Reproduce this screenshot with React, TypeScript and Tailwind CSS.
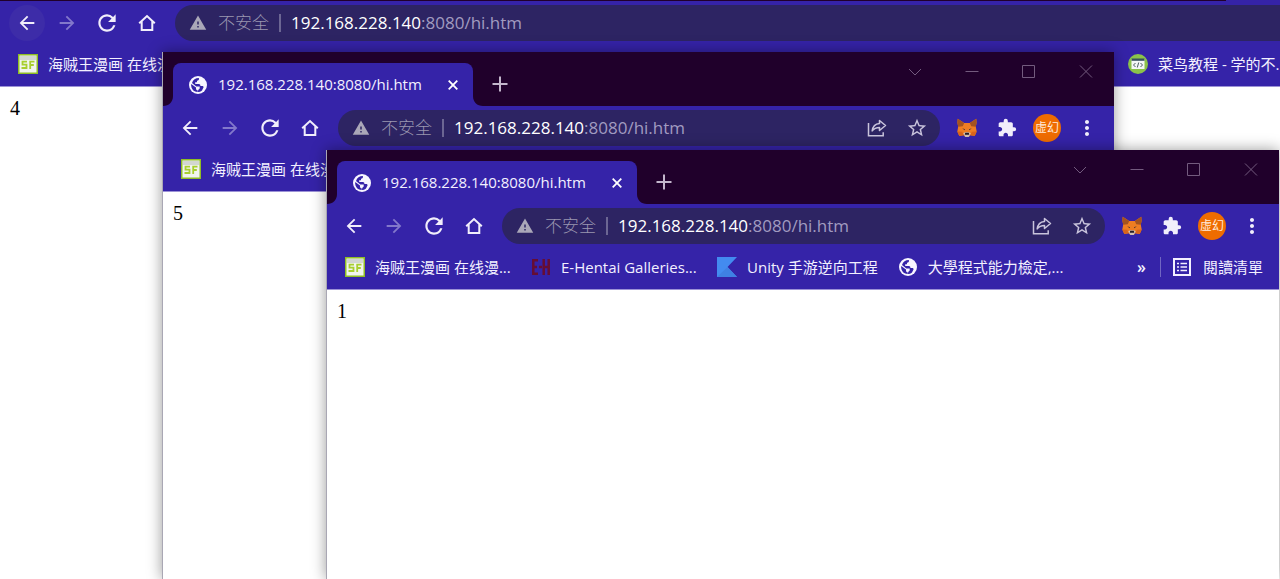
import React from "react";
import {
  MdArrowBack,
  MdArrowForward,
  MdExtension,
  MdMoreVert,
  MdRefresh,
  MdStarBorder,
  MdWarning,
} from "react-icons/md";

const uiFont = "font-['Open_Sans','Noto_Sans_CJK_SC',sans-serif]";

function Globe({ className = "" }: { className?: string }) {
  return (
    <svg viewBox="0 0 18 18" className={`size-[18px] shrink-0 ${className}`} aria-hidden="true">
      <circle cx="9" cy="9" r="9" fill="#f7f5ff" />
      <path
        d="M9.800 2.100C10.500 3.500 9.600 4.700 8 4.700V6.300H6.200V8H9.900C11 8 11.400 8.700 11.400 9.900H13C14 9.900 14.500 10.400 14.600 11.300L13 14.400C11.800 15.400 10.200 16 8.700 16V14.300C7.600 14.300 7 13.600 7 12.500V11.500L2.200 8.100C2 9 2.100 10.300 2.500 11.400A7 7 0 0 0 8.200 16H9L9.200 13.900 10.700 12.400V10.600H7.300L3 7C4 4 6.500 2.100 9.800 2.100Z"
        fill="#3523a8"
      />
    </svg>
  );
}

function HomeIcon() {
  return (
    <svg viewBox="0 0 20 20" className="size-5" fill="none" stroke="currentColor" strokeWidth="2" aria-hidden="true">
      <path d="M2.200 10.200 10 3l7.800 7.200M4.700 8.500V17h10.600V8.500" />
    </svg>
  );
}

function ShareIcon() {
  return (
    <svg viewBox="0 0 20 20" className="size-5" fill="none" stroke="currentColor" strokeWidth="1.500" aria-hidden="true">
      <path d="M1.500 5v12.700h14.700v-3.500" />
      <path d="M12.500 2.500 18.500 7.500l-6 5V9.600c-3.300 0-5.500 1-7.300 3.300.5-4 2.800-7 7.300-7.400Z" strokeLinejoin="round" />
    </svg>
  );
}

function Fox() {
  return (
    <svg viewBox="0 0 20 20" className="size-5" aria-hidden="true">
      <path d="M.7.8 7.200 5h5.600L19.300.8l.3 4-.8 4 .9 4.700-2 4.500-4.200-.8L11.500 19h-3l-2-1.800-4.200.8-2-4.500.9-4.700-.8-4Z" fill="#ee7d22" />
      <path d="M.7.8 7.200 5 5.800 8.200 1.200 8.800.4 4.800ZM19.300.8 12.800 5l1.400 3.200 4.600.6.800-4Z" fill="#a4531f" />
      <path d="m.3 13.500 5 .2 1.200 3.500-4.200.8ZM19.700 13.500l-5 .2-1.200 3.500 4.200.8Z" fill="#d9641c" />
      <path d="m5.200 10.300 2.800.9-.3 1.100ZM14.800 10.300l-2.800.9.3 1.100Z" fill="#3a2c33" />
      <path d="m6.300 15.200 2-1h3.400l2 1-2 3.800H8.300Z" fill="#cfc0b8" />
      <path d="M8.200 14.800h3.600l.4 2H7.800Z" fill="#241b26" />
    </svg>
  );
}

function SfIcon() {
  return (
    <svg viewBox="0 0 20 20" className="size-5 shrink-0" aria-hidden="true">
      <rect x=".75" y=".75" width="18.500" height="18.500" fill="#f1f4ee" stroke="#8fbd24" strokeWidth="1.500" />
      <path d="M2 2h16v4H2Z" fill="#d2d6d2" />
      <path d="M9 7.700H4.500v3h4v3.300H3.500M16.500 7.700H12.200V15M12 11h3.800" fill="none" stroke="#a8cf2f" strokeWidth="1.800" />
    </svg>
  );
}

function EhIcon() {
  return (
    <svg viewBox="0 0 20 20" className="size-5 shrink-0" fill="none" stroke="#660d33" strokeWidth="2.500" aria-hidden="true">
      <path d="M7 3.300H2.300v13.400H7M2.300 10H6M8 10h3M12.700 2v16M17.700 2v16M12.700 10h5" />
    </svg>
  );
}

function KiteIcon() {
  return (
    <svg viewBox="0 0 20 20" className="size-5 shrink-0" aria-hidden="true">
      <path d="M0 0h20L10.500 10 20 20H0Z" fill="#438bf0" />
      <path d="M10.500 10 20 20H0Z" fill="#3f80e3" />
    </svg>
  );
}

function CodeBadge() {
  return (
    <svg viewBox="0 0 20 20" className="size-5 shrink-0" aria-hidden="true">
      <circle cx="10" cy="10" r="10" fill="#8bc34a" />
      <path d="M3.500 5h13v10h-13Z" fill="#f4f7f8" />
      <path d="M3.500 4.500h13v2.300h-13Z" fill="#37505c" />
      <path d="m7.500 9-2 2 2 2m5-4 2 2-2 2m-1.800-4.500-1.400 5" fill="none" stroke="#4d5b62" />
    </svg>
  );
}

function ListIcon() {
  return (
    <svg viewBox="0 0 18 18" className="size-[18px] shrink-0" fill="none" stroke="currentColor" aria-hidden="true">
      <rect x="1" y="1" width="16" height="16" strokeWidth="2" />
      <path d="M4 5.500h2M4 9h2M4 12.500h2M7.500 5.500H14M7.500 9H14M7.500 12.500H14" strokeWidth="1.500" />
    </svg>
  );
}

function IconButton({
  label,
  className = "",
  children,
}: {
  label: string;
  className?: string;
  children: React.ReactNode;
}) {
  return (
    <button
      type="button"
      aria-label={label}
      className={`flex size-9 shrink-0 items-center justify-center rounded-full ${className}`}
    >
      {children}
    </button>
  );
}

function TitleBar() {
  return (
    <div className="flex h-[54px] items-end bg-[#20002b]">
      <svg viewBox="0 0 10 10" className="size-[10px] shrink-0 text-[#3523a8]" aria-hidden="true">
        <path d="M10 0v10H0C6 10 10 6 10 0Z" fill="currentColor" />
      </svg>
      <div className="flex h-[43px] w-[300px] shrink-0 items-center rounded-t-lg bg-[#3523a8] pr-3 pl-4">
        <Globe />
        <span className="ml-[11px] flex-1 text-[15px] whitespace-nowrap text-[#f3f0ff]">192.168.228.140:8080/hi.htm</span>
        <button type="button" aria-label="關閉分頁" className="flex size-4 items-center justify-center text-white">
          <svg viewBox="0 0 10 10" className="size-[10px]" stroke="currentColor" strokeWidth="1.800" aria-hidden="true">
            <path d="m.7.7 8.600 8.600M9.300.7.7 9.300" />
          </svg>
        </button>
      </div>
      <svg viewBox="0 0 10 10" className="size-[10px] shrink-0 text-[#3523a8]" aria-hidden="true">
        <path d="M0 0v10h10C4 10 0 6 0 0Z" fill="currentColor" />
      </svg>
      <button type="button" aria-label="新分頁" className="mb-[10px] ml-[5px] flex size-6 items-center justify-center text-[#c3b6cc]">
        <svg viewBox="0 0 16 16" className="size-4" stroke="currentColor" strokeWidth="2" aria-hidden="true">
          <path d="M8 .5v15M.5 8h15" />
        </svg>
      </button>
      <div className="mb-[15px] ml-auto flex gap-[17px] pr-2 text-[#735b7e]">
        {[
          ["搜尋分頁", "m1 5 6 6 6-6"],
          ["最小化", "M.5 7.500h13"],
          ["最大化", "M.5 1.500h12v12H.5Z"],
          ["關閉", "m1 1.500 12 12m0-12-12 12"],
        ].map(([label, d]) => (
          <button key={label} type="button" aria-label={label} className="flex size-10 items-center justify-center">
            <svg viewBox="0 0 14 15" className="h-[15px] w-[14px]" fill="none" stroke="currentColor" aria-hidden="true">
              <path d={d} />
            </svg>
          </button>
        ))}
      </div>
    </div>
  );
}

function Address({ openEnded }: { openEnded: boolean }) {
  return (
    <div
      className={`flex h-9 flex-1 items-center bg-[#2d2463] pr-[5px] pl-[14px] ${openEnded ? "rounded-l-full" : "rounded-full"}`}
    >
      <MdWarning className="size-[18px] shrink-0 text-[#aaa7b8]" aria-hidden="true" />
      <span className="ml-[11px] shrink-0 text-[17px] font-light text-[#9a96b0]">不安全</span>
      <span className="mx-[10px] h-[18px] w-[2px] shrink-0 bg-[#6c6693]" />
      <span className="shrink-0 text-[17px] whitespace-nowrap text-[#a19bc0]">
        <span className="text-white">192.168.228.140</span>:8080/hi.htm
      </span>
      {!openEnded && (
        <div className="ml-auto flex gap-1 text-[#c9c4dc]">
          <IconButton label="分享">
            <ShareIcon />
          </IconButton>
          <IconButton label="加入書籤">
            <MdStarBorder className="size-[22px]" />
          </IconButton>
        </div>
      )}
    </div>
  );
}

function Toolbar({ maximized = false }: { maximized?: boolean }) {
  return (
    <div
      className={`flex h-[45px] items-center bg-[#3523a8] pb-[2px] pl-[9px] text-[#f1eefb] ${maximized ? "" : "pr-[9px]"}`}
    >
      <div className="mr-[10px] flex gap-1">
        <IconButton label="上一頁" className={maximized ? "bg-[#3d2ca8]" : ""}>
          <MdArrowBack className="size-[22px]" />
        </IconButton>
        <IconButton label="下一頁" className="text-[#8378cb]">
          <MdArrowForward className="size-[22px]" />
        </IconButton>
        <IconButton label="重新載入">
          <MdRefresh className="size-[26px]" />
        </IconButton>
        <IconButton label="首頁">
          <HomeIcon />
        </IconButton>
      </div>
      <Address openEnded={maximized} />
      {!maximized && (
        <div className="ml-[9px] flex gap-1">
          <IconButton label="MetaMask">
            <Fox />
          </IconButton>
          <IconButton label="擴充功能">
            <MdExtension className="size-5" />
          </IconButton>
          <IconButton label="個人資料">
            <span className="flex size-7 items-center justify-center rounded-full bg-[#ef6c00] text-[12px] whitespace-nowrap text-[#ffe9d8]">
              虚幻
            </span>
          </IconButton>
          <IconButton label="選單">
            <MdMoreVert className="size-6" />
          </IconButton>
        </div>
      )}
    </div>
  );
}

function Bookmark({
  icon,
  text,
  capped = false,
}: {
  icon: React.ReactNode;
  text: string;
  capped?: boolean;
}) {
  return (
    <a
      href="#"
      className={`flex shrink-0 items-center gap-[10px] text-[15px] whitespace-nowrap text-[#f3f0ff] ${capped ? "w-[166px]" : ""}`}
    >
      {icon}
      <span>{text}</span>
    </a>
  );
}

function BookmarkBar({ children }: { children: React.ReactNode }) {
  return (
    <div className="flex h-[41px] items-center gap-5 border-b border-[#9c92d6] bg-[#3523a8] pb-1 pl-[18px]">
      {children}
    </div>
  );
}

function Page({ children }: { children: React.ReactNode }) {
  return (
    <main className="flex-1 bg-white px-[10px] pt-[9px] font-['Liberation_Serif',serif] text-[20px] leading-6 text-black">
      {children}
    </main>
  );
}

const manga = <Bookmark icon={<SfIcon />} text="海贼王漫画 在线漫..." capped />;

function BrowserWindow({
  className,
  bookmarks,
  children,
}: {
  className: string;
  bookmarks: React.ReactNode;
  children: React.ReactNode;
}) {
  return (
    <section
      className={`absolute bottom-0 flex flex-col border-l border-[#a9a7b4] bg-white shadow-[0_0_14px_rgba(0,0,0,0.4)] ${className}`}
    >
      <TitleBar />
      <Toolbar />
      <BookmarkBar>{bookmarks}</BookmarkBar>
      <Page>{children}</Page>
    </section>
  );
}

export default function App() {
  return (
    <div className={`relative flex min-h-screen flex-col overflow-hidden bg-white ${uiFont}`}>
      <section className="flex flex-1 flex-col">
        <div className="h-px bg-[#3523a8] pr-[54px]">
          <div className="h-full bg-[#20002b]" />
        </div>
        <Toolbar maximized />
        <BookmarkBar>
          {manga}
          <div className="ml-auto w-[152px]">
            <Bookmark icon={<CodeBadge />} text="菜鸟教程 - 学的不." />
          </div>
        </BookmarkBar>
        <Page>4</Page>
      </section>

      <BrowserWindow className="top-[52px] right-[166px] left-[162px]" bookmarks={manga}>
        5
      </BrowserWindow>

      <BrowserWindow
        className="top-[150px] right-px left-[326px]"
        bookmarks={
          <>
            {manga}
            <Bookmark icon={<EhIcon />} text="E-Hentai Galleries..." capped />
            <Bookmark icon={<KiteIcon />} text="Unity 手游逆向工程" />
            <Bookmark icon={<Globe className="mx-px" />} text="大學程式能力檢定,..." capped />
            <div className="ml-auto flex items-center pr-4 text-[15px] whitespace-nowrap text-[#f3f0ff]">
              <button type="button" aria-label="更多書籤" className="px-[14px] text-[16px] leading-5 font-semibold">
                »
              </button>
              <span className="h-5 w-px bg-[#7166c2]" />
              <button type="button" className="ml-3 flex items-center gap-3">
                <ListIcon />
                閱讀清單
              </button>
            </div>
          </>
        }
      >
        1
      </BrowserWindow>
    </div>
  );
}
